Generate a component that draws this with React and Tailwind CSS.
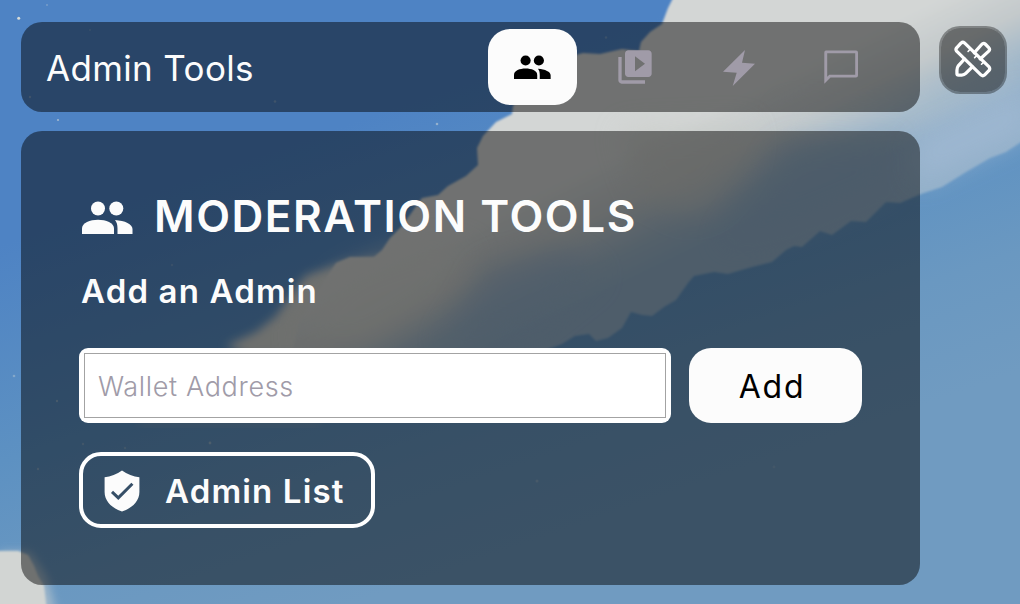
import React from "react";
import { MdVideoLibrary } from "react-icons/md";

function Sky() {
  return (
    <svg className="absolute inset-0 h-full w-full" viewBox="0 0 1020 604" preserveAspectRatio="none" aria-hidden="true">
      <defs>
        <linearGradient id="sky" gradientUnits="userSpaceOnUse" x1="330" y1="130" x2="480" y2="560">
          <stop offset="0" stopColor="#4e83c4" />
          <stop offset="0.45" stopColor="#5d91c2" />
          <stop offset="0.75" stopColor="#6a98c1" />
          <stop offset="1" stopColor="#709bc1" />
        </linearGradient>
        <linearGradient id="cloud" gradientUnits="userSpaceOnUse" x1="570" y1="177" x2="622" y2="285">
          <stop offset="0" stopColor="#d3d6d5" />
          <stop offset="0.4" stopColor="#c3c9cb" />
          <stop offset="0.75" stopColor="#a0b7c9" />
          <stop offset="1" stopColor="#93b0c9" />
        </linearGradient>
        <filter id="soft1" x="-10%" y="-10%" width="120%" height="120%"><feGaussianBlur stdDeviation="1.3" /></filter>
        <filter id="soft5" x="-20%" y="-20%" width="140%" height="140%"><feGaussianBlur stdDeviation="5" /></filter>
        <filter id="soft14" x="-40%" y="-40%" width="180%" height="180%"><feGaussianBlur stdDeviation="14" /></filter>
      </defs>
      <rect width="1020" height="604" fill="url(#sky)" />
      <path filter="url(#soft5)" fill="#d0d3d0" d="M385 258L345 262L305 276L290 296L276 316L256 332L226 346L250 356H420L430 280Z" />
      <path
        filter="url(#soft1)"
        fill="url(#cloud)"
        d="M676 -8L668 8L662 24L650 32L641 42L639 51L622 49L600 54L583 53L572 56L545 66L525 88L513 106L512 114L496 122L483 136L477 148L478 165L466 176L448 186L438 195L422 198L412 212L402 226L390 238L382 250L374 257L350 257L336 263L322 285L300 320L290 362L430 375L540 352L562 344L575 336L589 334L596 341L608 338L622 328L631 312L642 315L652 316L664 307L676 300L688 283L694 276L714 272L728 274L752 267L772 262L786 250L794 246L802 247L820 231L832 235L851 221L866 222L886 202L900 203L921 194L942 187L966 172L990 158L1006 152L1030 136V-8Z"
      />
      <path filter="url(#soft14)" fill="#d3d5d1" opacity="0.75" d="M315 300L350 270L430 240L475 250L440 300L370 345H295Z" />
      <path filter="url(#soft14)" fill="#93afca" opacity="0.6" d="M485 268L560 250L600 275L530 330L440 345L470 300Z" />
      <path filter="url(#soft14)" fill="#c8cac6" opacity="0.6" d="M620 130L750 125L745 165L715 205L690 215L640 190Z" />
      <path filter="url(#soft14)" fill="#8fadc9" opacity="0.7" d="M785 145L890 140V190L790 230L720 245L760 190Z" />
      <path filter="url(#soft14)" fill="#9fb8d2" opacity="0.9" d="M915 140L1030 86V130L915 184Z" />
      <path filter="url(#soft14)" fill="#c4ced3" opacity="0.4" d="M780 108L930 100L1020 62V78L925 118L780 122Z" />
      <path filter="url(#soft5)" fill="#c4bcae" opacity="0.2" d="M140 418H320V426H140Z" />
      <path filter="url(#soft5)" fill="#c8cfd0" opacity="0.6" d="M0 552H30L46 576L56 612H0Z" />
      <path filter="url(#soft1)" fill="#d2d5d3" d="M-6 551H18L28 555L34 566L38 576L44 586L47 612H-6Z" />
      <g fill="#d8dcd8">
        <circle cx="18.7" cy="18.3" r="1.5" />
        <circle cx="58" cy="120" r="1.1" opacity="0.6" />
        <circle cx="47" cy="5" r="1" opacity="0.3" />
        <circle cx="437" cy="124" r="1.3" opacity="0.5" />
        <circle cx="30" cy="97" r="1.2" opacity="0.3" />
        <circle cx="275" cy="101.500" r="1.3" opacity="0.3" />
        <circle cx="90" cy="30" r="1.1" opacity="0.18" />
        <circle cx="606" cy="37.500" r="1.2" opacity="0.25" />
        <circle cx="14" cy="376" r="1.3" opacity="0.35" />
        <circle cx="57" cy="401" r="1.2" opacity="0.35" />
        <circle cx="210" cy="443" r="1.4" opacity="0.4" />
        <circle cx="83" cy="444" r="1.2" opacity="0.25" />
        <circle cx="125" cy="448" r="1.2" opacity="0.25" />
        <circle cx="38" cy="469" r="1.2" opacity="0.3" />
        <circle cx="537" cy="481" r="1.5" opacity="0.25" />
        <circle cx="774" cy="467" r="1.4" opacity="0.15" />
        <circle cx="172" cy="265" r="1.2" opacity="0.2" />
      </g>
    </svg>
  );
}

function PeopleIcon({ className }) {
  return (
    <svg className={className} viewBox="0 0 51 33" fill="currentColor" aria-hidden="true">
      <circle cx="16" cy="7.500" r="7" />
      <circle cx="34.300" cy="7.500" r="7" />
      <path d="M0 33V27.500C0 21.500 8 18.700 16 18.700S32 21.500 32 27.500V33Z" />
      <path d="M33 18.900C43 19.600 50.500 23 50.500 28V33H35.500V27.500C35.500 23.500 34.700 21 33 18.900Z" />
    </svg>
  );
}

function BoltIcon({ className }) {
  return (
    <svg className={className} viewBox="0 0 32 36" fill="currentColor" aria-hidden="true">
      <path d="M22 0L19 12.800L32 13.800L9.700 36L13.700 22.800L0 21.800Z" />
    </svg>
  );
}

function ChatIcon({ className }) {
  return (
    <svg className={className} viewBox="0 0 34 34" aria-hidden="true">
      <path
        fill="currentColor"
        fillRule="evenodd"
        d="M2 0.500H32Q34 0.500 34 2.500V25.500Q34 27.500 32 27.500H6.500L0.300 33.700V2.500Q0.300 0.500 2 0.500ZM3.200 3.300V26.800L5.300 24.700H31.200V3.300Z"
      />
    </svg>
  );
}

function ShieldIcon({ className }) {
  return (
    <svg className={className} viewBox="0 0 36 42" aria-hidden="true">
      <path fill="currentColor" d="M18 0.500C13 4 6.500 6.600 0.600 7.300V22C0.600 31.500 8.500 38.500 18 41.500C27.500 38.500 35.400 31.500 35.400 22V7.300C29.500 6.600 23 4 18 0.500Z" />
      <path fill="none" stroke="#364f67" strokeWidth="3" d="M8 21.800L14.300 27.800L28.400 13.700" />
    </svg>
  );
}

function ToolsIcon({ className }) {
  return (
    <svg className={className} viewBox="-4 -4 116 116" fill="none" stroke="currentColor" strokeWidth="10" strokeLinecap="round" strokeLinejoin="round" aria-hidden="true">
      <path d="M4 30Q0 25 4 20L18 5Q23 1 28 5L103 78Q107 84 103 89L89 103Q84 107 79 103Z" />
      <path d="M58 35L81 9Q86 3 92 9L102 19Q107 24 102 30L76 54" />
      <path d="M28 54L9 75Q5 81 5 88V98Q5 103 10 103H20Q27 103 32 98L52 78" />
      <path strokeWidth="5" d="M45 24L39 31M66 43L59 50M87 63L80 70" />
    </svg>
  );
}

function Tab({ active, label, children }) {
  return (
    <button
      aria-label={label}
      className={
        "flex h-[76px] w-[89px] items-center justify-center rounded-[22px] " +
        (active ? "bg-[#fcfcfc] text-black" : "text-[#a09ba8]")
      }
    >
      {children}
    </button>
  );
}

export default function App() {
  return (
    <div className="relative h-[604px] w-[1020px] overflow-hidden font-['Inter',sans-serif] text-[#fcfcfc]">
      <Sky />
      <div className="relative flex items-start gap-[19px] pt-[22px] pl-[21px]">
        <div className="flex w-[899px] flex-col gap-[19px]">
          <header className="flex h-[90px] items-center justify-between rounded-[21px] bg-black/47 pr-[35px] pl-[25px]">
            <h1 className="mt-[3px] text-[35px] leading-none tracking-[0.350px] whitespace-nowrap">Admin Tools</h1>
            <nav className="flex gap-[13.600px]">
              <Tab active label="Moderation">
                <PeopleIcon className="h-[24px] w-[37px]" />
              </Tab>
              <Tab label="Video">
                <MdVideoLibrary className="size-10" />
              </Tab>
              <Tab label="Actions">
                <BoltIcon className="mt-[2px] ml-[2px] h-[36px] w-[32px]" />
              </Tab>
              <Tab label="Messages">
                <ChatIcon className="h-[34px] w-[34px]" />
              </Tab>
            </nav>
          </header>

          <main className="flex h-[454px] flex-col items-start rounded-[21px] bg-black/47 pt-[60px] pl-[58px]">
            <div className="flex h-[50px] items-center gap-[21px] pl-[3px]">
              <PeopleIcon className="mt-[3px] h-[33px] w-[51px]" />
              <h2 className="text-[44px] leading-none font-semibold tracking-[1.550px] whitespace-nowrap">MODERATION TOOLS</h2>
            </div>
            <h3 className="mt-[33px] pl-[2px] text-[33px] leading-[34px] font-semibold tracking-[1.150px] whitespace-nowrap">Add an Admin</h3>
            <div className="mt-[40px] flex gap-[18px]">
              <div className="h-[75px] w-[592px] rounded-[9px] bg-white p-[5px]">
                <input
                  placeholder="Wallet Address"
                  className="h-full w-full border border-[#a3a3a3] px-[13px] pt-[2px] text-[27px] font-[350] tracking-[0.650px] outline-none placeholder:text-[#a09ba8]"
                />
              </div>
              <button className="h-[75px] w-[173px] rounded-[22px] bg-[#fcfcfc] pt-[2px] pr-[7px] text-[32px] tracking-[1.800px] text-black">Add</button>
            </div>
            <button className="mt-[29px] flex h-[76px] w-[296px] items-center gap-[25px] rounded-[22px] border-4 border-white pl-[21px]">
              <ShieldIcon className="mt-[1px] h-[42px] w-[36px]" />
              <span className="mt-[3px] text-[33px] leading-none font-semibold tracking-[1.150px] whitespace-nowrap">Admin List</span>
            </button>
          </main>
        </div>

        <button aria-label="Toggle tools" className="mt-[4px] flex size-[68px] items-center justify-center rounded-[21px] border-2 border-black/35 bg-black/47 bg-clip-padding pb-[3px] text-white">
          <ToolsIcon className="size-[38px]" />
        </button>
      </div>
    </div>
  );
}
